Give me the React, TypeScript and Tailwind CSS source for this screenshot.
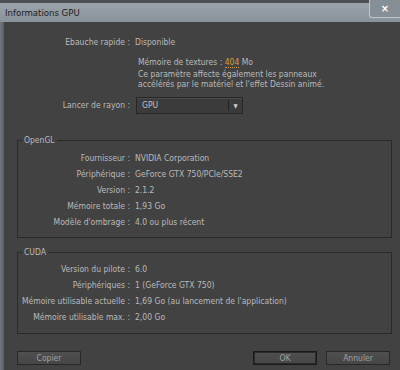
const OPENGL = [
  ['Fournisseur', 'NVIDIA Corporation'],
  ['Périphérique', 'GeForce GTX 750/PCIe/SSE2'],
  ['Version', '2.1.2'],
  ['Mémoire totale', '1,93 Go'],
  ["Modèle d'ombrage", '4.0 ou plus récent'],
];

const CUDA = [
  ['Version du pilote', '6.0'],
  ['Périphériques', '1 (GeForce GTX 750)'],
  ['Mémoire utilisable actuelle', "1,69 Go (au lancement de l'application)"],
  ['Mémoire utilisable max.', '2,00 Go'],
];

function Row({ label, value, labelW }: { label: string; value: string; labelW: string }) {
  return (
    <div className="flex h-4 items-center">
      <div className={`${labelW} shrink-0 whitespace-nowrap text-right`}>{label} :</div>
      <div className="ml-[5px] whitespace-nowrap">{value}</div>
    </div>
  );
}

function Group({ title, rows, className }: { title: string; rows: string[][]; className?: string }) {
  return (
    <div className={`relative ml-[13px] mr-[8px] border border-[#2a2a2a] ${className ?? ''}`}>
      <span className="absolute -top-[7px] left-[4px] bg-[#424242] px-[2px] leading-[12px]">{title}</span>
      {rows.map(([l, v]) => (
        <Row key={l} label={l} value={v} labelW="w-[112px]" />
      ))}
    </div>
  );
}

function Btn({ label, primary }: { label: string; primary?: boolean }) {
  return (
    <button
      className={`h-[14px] w-[64px] border bg-gradient-to-b from-[#4f4f4f] to-[#464646] text-center leading-[12px] text-[#a0a0a0] ${
        primary ? 'border-[#1a1a1a] shadow-[inset_0_0_0_1px_#2a2a2a]' : 'border-[#282828]'
      }`}
    >
      {label}
    </button>
  );
}

export default function App() {
  return (
    <div
      className="h-[370px] w-[400px] overflow-hidden bg-[#424242] text-[8.5px] text-[#bababa]"
      style={{ fontFamily: '"DejaVu Sans Condensed", "DejaVu Sans", sans-serif' }}
    >
      {/* Title bar */}
      <div className="flex h-[22px] border-t-[3px] border-[#4c5055] bg-gradient-to-b from-[#9ba3aa] to-[#89919a]">
        <div className="flex-1 pl-[5px] pt-[3px] text-[9.5px] leading-[13px] text-[#1b1d22]">Informations GPU</div>
        <div className="-mt-[3px] flex h-[18px] w-[31px] items-center justify-center rounded-bl-[3px] border-b border-l border-[#c0c6cc] bg-[#868e96] text-[11px] font-bold leading-none text-white">
          ×
        </div>
      </div>

      <div className="flex h-[348px]">
        {/* left window frame */}
        <div className="w-[4px] bg-gradient-to-r from-[#737a81] to-[#585d63]" />

        <div className="flex flex-1 flex-col">
          {/* Top section */}
          <div className="pt-[12px]">
            <Row label="Ebauche rapide" value="Disponible" labelW="w-[126px]" />
            <div className="ml-[134px] mt-[6px]">
              <div className="h-[12px] leading-[12px]">
                Mémoire de textures :{' '}
                <span className="border-b border-dotted border-[#d39b2a] text-[#d7a032]">404</span> Mo
              </div>
              <div className="mt-[1px] leading-[10px]">
                Ce paramètre affecte également les panneaux
                <br />
                accélérés par le matériel et l'effet Dessin animé.
              </div>
            </div>
            <div className="mt-[8px] flex h-[17px] items-center">
              <div className="w-[126px] shrink-0 text-right">Lancer de rayon :</div>
              <div className="ml-[6px] flex h-[17px] w-[107px] items-center border border-[#262626] bg-[#3b3b3b] shadow-[inset_0_1px_0_#4b4b4b]">
                <span className="flex-1 pl-[5px] text-[#c2c2c2]">GPU</span>
                <span className="h-[11px] w-px bg-[#232323]" />
                <span className="flex w-[13px] justify-center text-[6px] text-[#cfcfcf]">▼</span>
              </div>
            </div>
          </div>

          <Group title="OpenGL" rows={OPENGL} className="mt-[26px] pb-[7px] pt-[9px]" />

          <Group title="CUDA" rows={CUDA} className="mt-[14px] pb-[8px] pt-[8px]" />

          <div className="mt-[17px] flex items-center pl-[13px] pr-[10px]">
            <Btn label="Copier" />
            <div className="flex-1" />
            <Btn label="OK" primary />
            <div className="w-[9px]" />
            <Btn label="Annuler" />
          </div>
        </div>
      </div>
    </div>
  );
}
